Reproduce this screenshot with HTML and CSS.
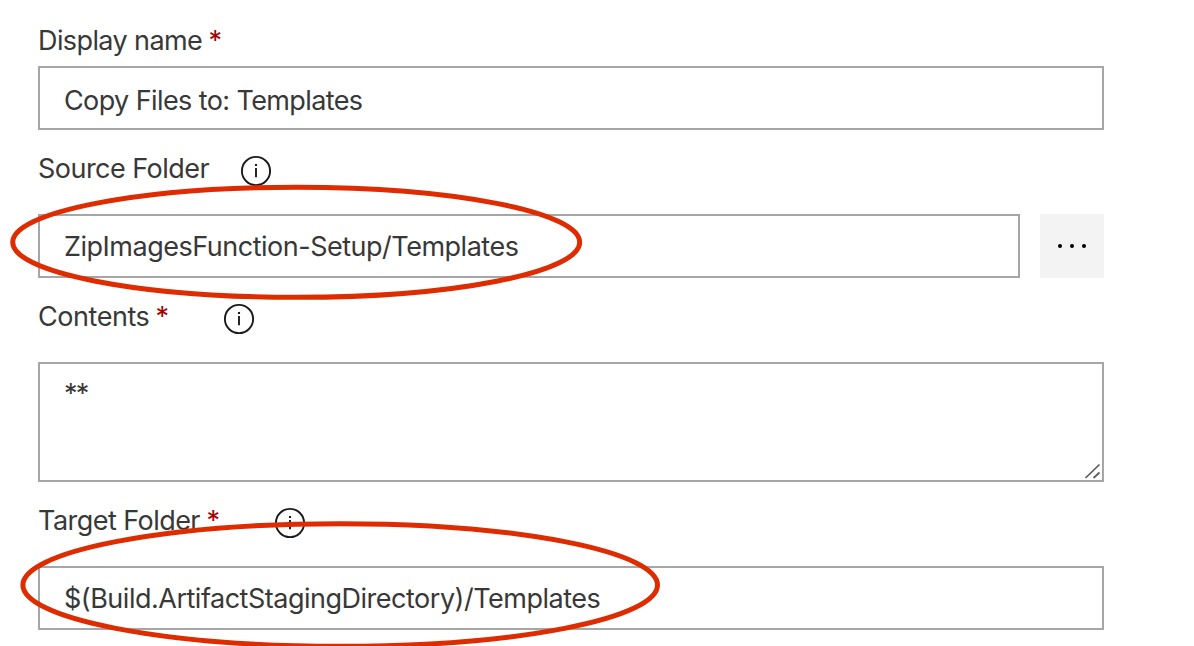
FILE: index.html
```html
<!DOCTYPE html>
<html lang="en">
<head>
<meta charset="utf-8">
<title>Copy Files</title>
<link rel="stylesheet" href="styles.css">
</head>
<body>
<svg class="defs" width="0" height="0">
  <symbol id="info" viewBox="0 0 32 32">
    <circle cx="16" cy="16" r="14.1" fill="none" stroke="#1b1b1b" stroke-width="1.9"/>
    <path d="M16 12.9V22.3" stroke="#1b1b1b" stroke-width="1.9"/>
    <path d="M16 9V11" stroke="#1b1b1b" stroke-width="2.1"/>
  </symbol>
</svg>
<main class="form">
  <section class="field name">
    <div class="label"><span class="t-name">Display name</span><span class="req">*</span></div>
    <div class="box box-low"><span class="t-copy">Copy Files to: Templates</span></div>
  </section>
  <section class="field source">
    <div class="label"><span class="t-source">Source Folder</span><svg class="info"><use href="#info"/></svg></div>
    <div class="row">
      <div class="box"><span class="t-zip">ZipImagesFunction-Setup/Templates</span></div>
      <div class="browse"><svg width="32" height="8"><circle cx="4" cy="4" r="2"/><circle cx="16" cy="4" r="2"/><circle cx="28" cy="4" r="2"/></svg></div>
    </div>
  </section>
  <section class="field contents">
    <div class="label"><span class="t-contents">Contents</span><span class="req">*</span><svg class="info"><use href="#info"/></svg></div>
    <div class="box area"><span class="t-stars">**</span>
      <svg class="grip" width="18" height="18"><path d="M1.5 16L15.5 2.5M9.5 16L15.5 10.5" stroke="#5c5c5c" stroke-width="1.7"/></svg>
    </div>
  </section>
  <section class="field target">
    <div class="label"><span class="t-target">Target Folder</span><span class="req">*</span><svg class="info"><use href="#info"/></svg></div>
    <div class="box"><span class="t-build">$(Build.ArtifactStagingDirectory)/Templates</span></div>
  </section>
</main>
<svg class="marks" width="1194" height="646">
  <ellipse cx="296.2" cy="242.3" rx="283.5" ry="55"/>
  <ellipse cx="340.2" cy="585" rx="317.3" ry="61.3"/>
</svg>
</body>
</html>
```
FILE: styles.css
```css
* { box-sizing: border-box; }
body {
  margin: 0;
  height: 646px;
  overflow: hidden;
  background: #fff;
  color: #383838;
  font: 27px/32px Inter, "Liberation Sans", sans-serif;
  white-space: nowrap;
}
.defs { position: absolute; }
.form { width: 1066px; margin-left: 38px; padding-top: 25px; }
.field { display: flex; flex-direction: column; }
.name { gap: 9px; margin-bottom: 23px; }
.source { gap: 29px; margin-bottom: 23px; }
.contents { gap: 29px; margin-bottom: 23px; }
.target { gap: 29px; }
.label { display: flex; height: 32px; }
.req { width: 12px; margin-left: 6.5px; color: #a40000; }
.info { width: 32px; height: 32px; margin-top: 2px; }
.source .info { margin-left: 30.7px; }
.contents .info { margin-left: 55.5px; }
.target .info { margin-left: 55.2px; }
.row { display: flex; gap: 20px; }
.box {
  display: flex;
  align-items: center;
  flex: 1 0 auto;
  height: 64px;
  padding-top: 2px;
  padding-left: 24px;
  border: 2px solid #a6a6a6;
}
.box-low { padding-top: 6px; }
.area { position: relative; height: 120px; align-items: flex-start; padding-top: 14px; }
.grip { position: absolute; right: 0; bottom: 0; }
.browse {
  display: flex;
  align-items: center;
  justify-content: center;
  width: 64px;
  height: 64px;
  background: #f3f3f3;
}
.marks { position: absolute; left: 0; top: 0; fill: none; stroke: #de2c00; stroke-width: 5; }
.t-name { width: 164px; letter-spacing: -0.6px; }
.t-source { width: 171px; letter-spacing: -0.53px; }
.t-contents { width: 111px; letter-spacing: -0.45px; }
.t-target { width: 162px; letter-spacing: -0.55px; }
.t-copy { letter-spacing: -0.6px; }
.t-zip, .t-build { letter-spacing: -0.49px; }
.t-stars { letter-spacing: -1.8px; }
```
